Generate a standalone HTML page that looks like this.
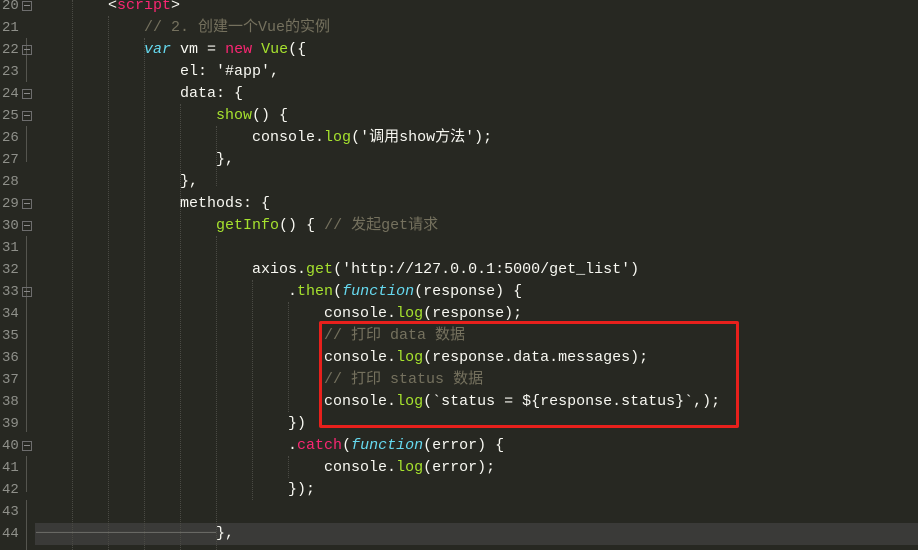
<!DOCTYPE html>
<html style="width:918px;height:550px;overflow:hidden"><head><meta charset="utf-8"><style>
body{margin:0;width:918px;height:550px;overflow:hidden;background:#272822;position:relative;font-family:"Liberation Mono","Noto Sans CJK SC",monospace;font-size:15px;color:#f8f8f2}
.l{position:absolute;left:0;height:22px;line-height:22px;white-space:pre;width:918px}
.n{position:absolute;left:2px;width:18px;color:#8f908a;font-size:14px}
.c{position:absolute;left:36px}
.f{position:absolute;left:22px;top:6px;width:8px;height:8px;border:1px solid #6e6e6e}
.f:after{content:"";position:absolute;left:1px;top:3px;width:6px;height:1px;background:#8a8a8a}
.k{color:#f92672}.g{color:#a6e22e}.b{color:#66d9ef;font-style:italic}.m{color:#75715e}
.v{position:absolute;bottom:0;border-left:1px dotted #4a4a44}
.hl{position:absolute;left:35px;top:523px;width:883px;height:22px;background:#3a3a38}
.box{position:absolute;left:319px;top:321px;width:414px;height:101px;border:3px solid #e8201c;border-radius:2px}
.fv{position:absolute;left:26px;width:1px;background:#55554f}
</style></head><body>
<div class="hl"></div>
<div class="v" style="left:72px;top:0"></div>
<div class="v" style="left:108px;top:16px"></div>
<div class="v" style="left:144px;top:38px"></div>
<div class="v" style="left:180px;top:104px"></div>
<div class="v" style="left:216px;top:126px;bottom:auto;height:60px"></div>
<div class="v" style="left:216px;top:236px"></div>
<div class="v" style="left:252px;top:280px;bottom:auto;height:220px"></div>
<div class="v" style="left:288px;top:302px;bottom:auto;height:110px"></div>
<div class="v" style="left:288px;top:456px;bottom:auto;height:22px"></div>
<div class="fv" style="top:38px;height:22px"></div>
<div class="fv" style="top:60px;height:22px"></div>
<div class="fv" style="top:126px;height:36px"></div>
<div class="fv" style="top:236px;height:68px"></div>
<div class="fv" style="top:302px;height:130px"></div>
<div class="fv" style="top:456px;height:36px"></div>
<div class="fv" style="top:500px;height:50px"></div>

<div class="l" style="top:-5px"><span class="n">20</span><span class="f"></span><span class="c">        &lt;<span class="k">script</span>&gt;</span></div>
<div class="l" style="top:17px"><span class="n">21</span><span class="c">            <span class="m">// 2. 创建一个Vue的实例</span></span></div>
<div class="l" style="top:39px"><span class="n">22</span><span class="f"></span><span class="c">            <span class="b">var</span> vm = <span class="k">new</span> <span class="g">Vue</span>({</span></div>
<div class="l" style="top:61px"><span class="n">23</span><span class="c">                el: '#app',</span></div>
<div class="l" style="top:83px"><span class="n">24</span><span class="f"></span><span class="c">                data: {</span></div>
<div class="l" style="top:105px"><span class="n">25</span><span class="f"></span><span class="c">                    <span class="g">show</span>() {</span></div>
<div class="l" style="top:127px"><span class="n">26</span><span class="c">                        console.<span class="g">log</span>('调用show方法');</span></div>
<div class="l" style="top:149px"><span class="n">27</span><span class="c">                    },</span></div>
<div class="l" style="top:171px"><span class="n">28</span><span class="c">                },</span></div>
<div class="l" style="top:193px"><span class="n">29</span><span class="f"></span><span class="c">                methods: {</span></div>
<div class="l" style="top:215px"><span class="n">30</span><span class="f"></span><span class="c">                    <span class="g">getInfo</span>() { <span class="m">// 发起get请求</span></span></div>
<div class="l" style="top:237px"><span class="n">31</span></div>
<div class="l" style="top:259px"><span class="n">32</span><span class="c">                        axios.<span class="g">get</span>('http://127.0.0.1:5000/get_list')</span></div>
<div class="l" style="top:281px"><span class="n">33</span><span class="f"></span><span class="c">                            .<span class="g">then</span>(<span class="b">function</span>(response) {</span></div>
<div class="l" style="top:303px"><span class="n">34</span><span class="c">                                console.<span class="g">log</span>(response);</span></div>
<div class="l" style="top:325px"><span class="n">35</span><span class="c">                                <span class="m">// 打印 data 数据</span></span></div>
<div class="l" style="top:347px"><span class="n">36</span><span class="c">                                console.<span class="g">log</span>(response.data.messages);</span></div>
<div class="l" style="top:369px"><span class="n">37</span><span class="c">                                <span class="m">// 打印 status 数据</span></span></div>
<div class="l" style="top:391px"><span class="n">38</span><span class="c">                                console.<span class="g">log</span>(`status = ${response.status}`,);</span></div>
<div class="l" style="top:413px"><span class="n">39</span><span class="c">                            })</span></div>
<div class="l" style="top:435px"><span class="n">40</span><span class="f"></span><span class="c">                            .<span class="k">catch</span>(<span class="b">function</span>(error) {</span></div>
<div class="l" style="top:457px"><span class="n">41</span><span class="c">                                console.<span class="g">log</span>(error);</span></div>
<div class="l" style="top:479px"><span class="n">42</span><span class="c">                            });</span></div>
<div class="l" style="top:501px"><span class="n">43</span></div>
<div class="l" style="top:523px"><span class="n">44</span><span class="c" style="color:#6a6a66">────────────────────</span><span class="c" style="left:216px">},</span></div>
<div class="box"></div>
</body></html>
